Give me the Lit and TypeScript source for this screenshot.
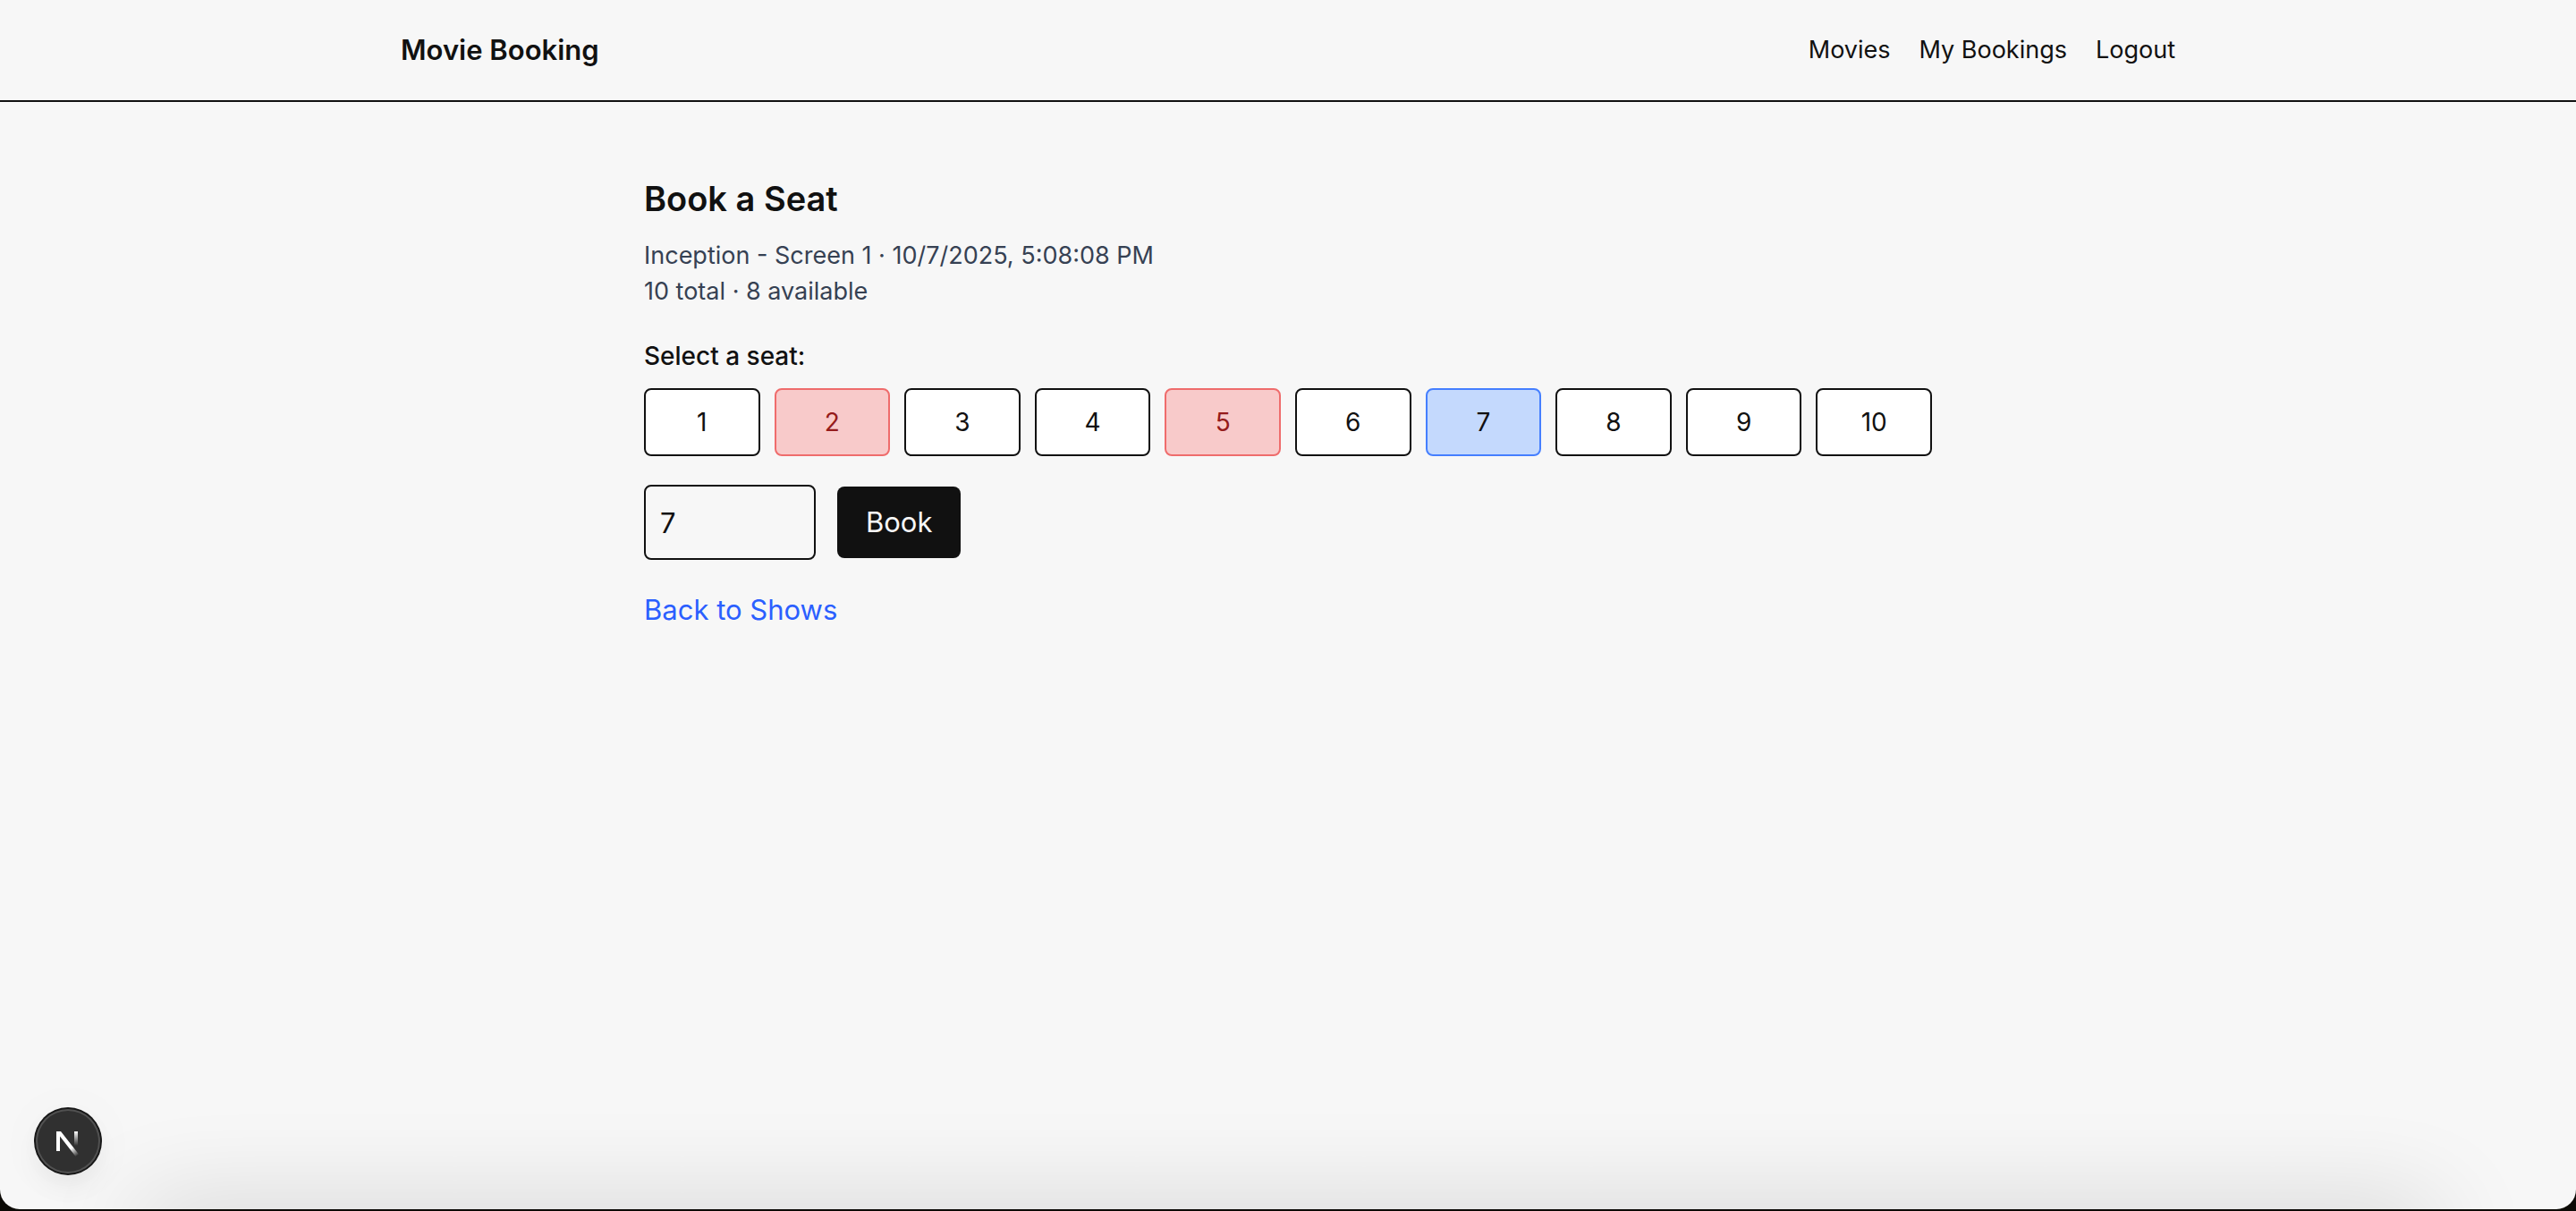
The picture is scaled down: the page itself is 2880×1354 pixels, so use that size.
import { LitElement, html, svg, css } from "lit";
import { customElement, state } from "lit/decorators.js";
import { classMap } from "lit/directives/class-map.js";

@customElement("site-header")
class SiteHeader extends LitElement {
  static styles = css`
    :host {
      display: block;
      border-bottom: 2px solid #111;
    }
    .bar {
      box-sizing: border-box;
      max-width: 2048px;
      margin: 0 auto;
      padding: 32px;
      display: flex;
      align-items: center;
      justify-content: space-between;
      line-height: 48px;
    }
    .brand {
      font-size: 31px;
      font-weight: 600;
    }
    .links {
      display: flex;
      gap: 32px;
      font-size: 27px;
    }
    a {
      color: inherit;
      text-decoration: none;
    }
  `;

  render() {
    return html`
      <header class="bar">
        <a class="brand" href="#home">Movie Booking</a>
        <nav class="links">
          <a href="#movies">Movies</a>
          <a href="#bookings">My Bookings</a>
          <a href="#logout">Logout</a>
        </nav>
      </header>
    `;
  }
}

@customElement("seat-booking")
class SeatBooking extends LitElement {
  @state() private selected = 7;
  private total = 10;
  private booked = [2, 5];

  static styles = css`
    :host {
      display: block;
      box-sizing: border-box;
      width: 100%;
      max-width: 1536px;
      margin: 0 auto;
      padding: 80px 48px;
    }
    h1 {
      margin: 0 0 16px;
      font-size: 38px;
      line-height: 56px;
      font-weight: 600;
    }
    .details {
      margin: 0 0 32px;
      font-size: 27px;
      line-height: 40px;
      color: #364153;
    }
    .details p {
      margin: 0;
    }
    .label {
      margin: 0 0 16px;
      font-size: 28px;
      line-height: 40px;
      font-weight: 500;
    }
    .seats {
      display: grid;
      grid-template-columns: repeat(10, 1fr);
      gap: 16px;
      margin-bottom: 32px;
    }
    button,
    input {
      font: inherit;
      color: inherit;
      border-radius: 8px;
      box-sizing: border-box;
    }
    .seat {
      padding: 16px 0;
      border: 2px solid #111;
      background: #fff;
      font-size: 28px;
      line-height: 40px;
    }
    .seat.booked {
      border-color: #ef6c6c;
      background: #f8caca;
      color: #951b1b;
    }
    .seat.selected {
      border-color: #457fff;
      background: #c4d9fd;
    }
    .form {
      display: flex;
      align-items: center;
      gap: 24px;
      margin-bottom: 32px;
      font-size: 31px;
      line-height: 48px;
    }
    .number {
      width: 192px;
      height: 84px;
      padding: 16px;
      border: 2px solid #111;
      background: transparent;
      appearance: textfield;
    }
    .book {
      padding: 16px 32px;
      border: 0;
      background: #111;
      color: #f7f7f7;
    }
    .back {
      font-size: 31px;
      line-height: 48px;
      color: #2b5fff;
      text-decoration: none;
    }
  `;

  render() {
    const seats = Array.from({ length: this.total }, (_, i) => i + 1);
    return html`
      <main>
        <h1>Book a Seat</h1>
        <div class="details">
          <p>Inception - Screen 1 · 10/7/2025, 5:08:08 PM</p>
          <p>${this.total} total · ${this.total - this.booked.length} available</p>
        </div>
        <p class="label" id="seats-label">Select a seat:</p>
        <div class="seats" role="group" aria-labelledby="seats-label">
          ${seats.map(
            (n) => html`<button
              type="button"
              class=${classMap({
                seat: true,
                booked: this.booked.includes(n),
                selected: n === this.selected,
              })}
              ?disabled=${this.booked.includes(n)}
              @click=${() => (this.selected = n)}
            >${n}</button>`
          )}
        </div>
        <form class="form" @submit=${(e: Event) => e.preventDefault()}>
          <input
            class="number"
            type="number"
            min="1"
            max=${this.total}
            aria-label="Seat number"
            .value=${String(this.selected)}
            @change=${(e: Event) =>
              (this.selected = Number((e.target as HTMLInputElement).value))}
          />
          <button class="book">Book</button>
        </form>
        <a class="back" href="#shows">Back to Shows</a>
      </main>
    `;
  }
}

@customElement("dev-badge")
class DevBadge extends LitElement {
  static styles = css`
    :host {
      display: block;
    }
    .badge {
      display: block;
      width: 76px;
      height: 76px;
      padding: 0;
      border: 0;
      border-radius: 50%;
      background: none;
      box-shadow: 0 16px 32px -8px rgba(0, 0, 0, 0.08),
        0 4px 64px rgba(0, 0, 0, 0.03);
    }
    svg {
      display: block;
    }
  `;

  render() {
    return html`
      <button class="badge" type="button" aria-label="Open developer tools">
        ${svg`<svg width="76" height="76" viewBox="0 0 76 76" fill="none">
          <defs>
            <linearGradient id="diagonal" x1="37" y1="38" x2="49" y2="54" gradientUnits="userSpaceOnUse">
              <stop offset="0.45" stop-color="#fff" />
              <stop offset="1" stop-color="#fff" stop-opacity="0" />
            </linearGradient>
            <linearGradient id="stem" x1="47" y1="27" x2="47" y2="43" gradientUnits="userSpaceOnUse">
              <stop offset="0" stop-color="#fff" />
              <stop offset="1" stop-color="#fff" stop-opacity="0" />
            </linearGradient>
          </defs>
          <circle cx="38" cy="38" r="38" fill="#171717" />
          <circle cx="38" cy="38" r="36" fill="#515151" />
          <circle cx="38" cy="38" r="34" fill="#303030" />
          <rect x="45" y="27" width="4" height="16" fill="url(#stem)" />
          <path d="M25 27H30L50 52.500L46.500 55L29 32.500V49H25Z" fill="url(#diagonal)" />
        </svg>`}
      </button>
    `;
  }
}

@customElement("app-root")
class AppRoot extends LitElement {
  static styles = css`
    :host {
      display: block;
      background: #0c0a06;
      color: #111;
      font-family: Inter, "Liberation Sans", sans-serif;
    }
    .window {
      position: relative;
      box-sizing: border-box;
      min-height: calc(100vh - 2px);
      border-radius: 0 0 22px 22px;
      background: #f7f7f7;
      overflow: hidden;
    }
    .edge {
      height: 2px;
    }
    .shade {
      position: absolute;
      inset: auto 150px -60px;
      height: 60px;
      border-radius: 40px;
      box-shadow: 0 0 110px rgba(0, 0, 0, 0.18);
      pointer-events: none;
    }
    .dev {
      position: absolute;
      left: 38px;
      bottom: 38px;
    }
  `;

  render() {
    return html`
      <div class="window">
        <site-header></site-header>
        <seat-booking></seat-booking>
        <div class="shade"></div>
        <dev-badge class="dev"></dev-badge>
      </div>
      <div class="edge"></div>
    `;
  }
}
